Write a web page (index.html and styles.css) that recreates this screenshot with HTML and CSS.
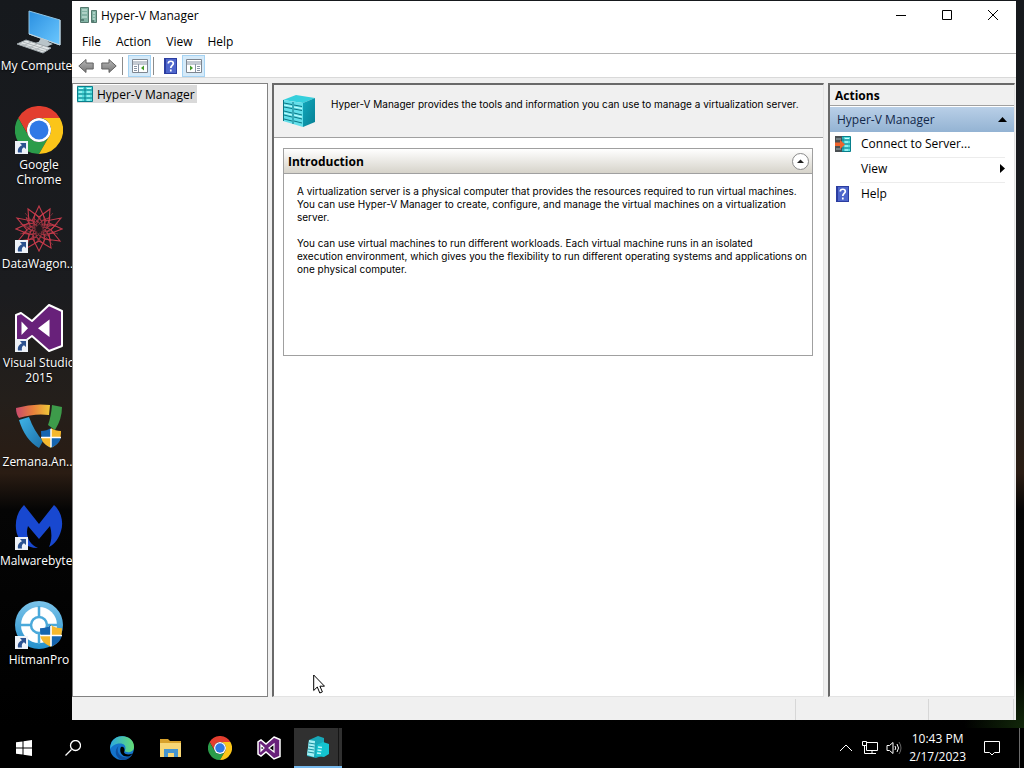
FILE: index.html
```html
<!DOCTYPE html>
<html lang="en">
<head>
    <meta charset="UTF-8">
    <meta name="viewport" content="width=device-width, initial-scale=1.0">
    <title>Hyper-V Manager</title>
    <link rel="stylesheet" href="styles.css">
</head>
<body>
    <!-- Shared icons -->
    <svg class="sprites" aria-hidden="true">
        <defs>
            <linearGradient id="screen" x1="0" y1="0" x2="1" y2="1"><stop offset="0" stop-color="#2a8fe0"/><stop offset="1" stop-color="#6cc8ff"/></linearGradient>
            <linearGradient id="zemana-top"><stop offset="0" stop-color="#c94a6c"/><stop offset=".5" stop-color="#e8803c"/><stop offset="1" stop-color="#f0c838"/></linearGradient>
            <linearGradient id="zemana-left" x1="0" y1="0" x2="1" y2="1"><stop offset="0" stop-color="#3fb4e8"/><stop offset="1" stop-color="#1c6fa8"/></linearGradient>
            <linearGradient id="ring" x1="0" y1="0" x2="0" y2="1"><stop offset="0" stop-color="#7cc4ea"/><stop offset="1" stop-color="#2490cc"/></linearGradient>
            <linearGradient id="arrow-fill" x1="0" y1="0" x2="0" y2="1"><stop offset="0" stop-color="#b8b8b8"/><stop offset="1" stop-color="#777"/></linearGradient>
            <linearGradient id="edge-top" x1="0" y1="0" x2="1" y2="0"><stop offset="0" stop-color="#2ca8e0"/><stop offset="1" stop-color="#64dc74"/></linearGradient>
            <linearGradient id="cube-side" x1="0" y1="0" x2="1" y2="1"><stop offset="0" stop-color="#12a8bc"/><stop offset="1" stop-color="#067f94"/></linearGradient>
        </defs>
        <symbol id="shortcut" viewBox="0 0 13 13">
            <path d="M0 0h13v13H0z" fill="#eef2f8"/>
            <path d="M5 2h6v6L9 6.200C7 7 6.500 9 7 11.500H3C2.300 8 4 5.500 7 4.200z" fill="#2c5290"/>
        </symbol>
        <symbol id="shield" viewBox="0 0 20 20">
            <path d="M10 0C7 2 4 3 0 3c0 8 2 13 10 17z" fill="#1565b0"/>
            <path d="M10 0c3 2 6 3 10 3 0 8-2 13-10 17z" fill="#f5b82e"/>
            <path d="M0 9h10v11C4 17 1 14 0 9z" fill="#f5b82e"/>
            <path d="M10 9h10c-1 5-4 8-10 11z" fill="#1565b0"/>
            <path d="M10 1v18M0 9.500h20" stroke="#fff" stroke-width="1.500"/>
        </symbol>
        <symbol id="chrome" viewBox="0 0 48 48">
            <path d="M3.200 12A24 24 0 0 1 44.800 12H24A12 12 0 0 0 13.600 30z" fill="#e33e2f"/>
            <path d="M3.200 12A24 24 0 0 0 24 48L34.400 30A12 12 0 0 1 13.600 30z" fill="#2b9c4a"/>
            <path d="M44.800 12A24 24 0 0 1 24 48L34.400 30A12 12 0 0 0 24 12z" fill="#fbc519"/>
            <circle cx="24" cy="24" r="12" fill="#fff"/>
            <circle cx="24" cy="24" r="9.500" fill="#2f79e6"/>
        </symbol>
        <symbol id="vs" viewBox="0 0 48 48">
            <path d="M34 1L47 7V42L34 47L17 32L6 40L1 37V11L6 9L17 17z" fill="#68217a" stroke="#fff" stroke-width="2" stroke-linejoin="round"/>
            <path d="M34.500 15.500V33L23 24.200zM6.500 17.500L13 24.200L6.500 31z" fill="#fff"/>
        </symbol>
        <symbol id="server" viewBox="0 0 16 16">
            <path d="M.5.500h15v15H.5z" fill="#56dede" stroke="#087f8c"/>
            <path d="M8 0v16M0 4h16M1 8h14M1 12h14" stroke="#087f8c"/>
            <path d="M2 2.500h4M10 2.500h4M2 6h3M10 6h3M2 10h3M10 10h3M2 14h3M10 14h3" stroke="#c9ffff"/>
        </symbol>
        <symbol id="help" viewBox="0 0 13 16">
            <path d="M0 0h13v16H0z" fill="#2b3da0"/>
            <path d="M2 1h10v14H2z" fill="#4e66cc"/>
            <path d="M4.300 5.500C4.300 2.500 9.300 2.500 9.300 5.500C9.300 7.500 6.800 7.500 6.800 10M6.800 11.500v2" fill="none" stroke="#fff" stroke-width="1.700"/>
        </symbol>
    </svg>

    <main class="desktop">
        <!-- Desktop shortcuts -->
        <nav class="shortcuts" aria-label="Desktop">
            <button class="shortcut">
                <svg viewBox="0 0 48 48">
                    <path d="M14 4L45 13V38L14 27z" fill="url(#screen)" stroke="#8fc4e4"/>
                    <path d="M14 27L45 38V13" fill="none" stroke="#c9d6dc"/>
                    <path d="M26 31l7 3-1 4-9-2zM20 36l9-3 9 4-7 3z" fill="#b9c4c9"/>
                    <path d="M11 33L36 41L28 46L2 37z" fill="#e2e6e7" stroke="#9aa3a8"/>
                    <path d="M8 35l25 8M5 36.500l25 8M16 35l-8 4M22 37l-8 4M28 39l-8 4" stroke="#a4acb0" stroke-width=".8"/>
                </svg>
                <span>My Computer</span>
            </button>
            <button class="shortcut">
                <svg viewBox="0 0 48 48"><use href="#chrome" width="48" height="48"/><use href="#shortcut" y="35" width="13" height="13"/></svg>
                <span>Google Chrome</span>
            </button>
            <button class="shortcut">
                <svg viewBox="0 0 48 48">
                    <g fill="none" stroke="#c23a4a" stroke-width="1.100">
                        <g id="petals">
                            <path d="M24 1L31 16L46 13L36 25L45 36L30 34L24 46L18 34L3 36L12 25L2 13L17 16z"/>
                            <path d="M35 4L34 18L47 24L34 29L36 43L24 36L12 43L14 29L1 24L14 18L13 4L24 12z"/>
                        </g>
                        <path d="M10 8L38 40M38 8L10 40M5 19L43 29M43 19L5 29" stroke-width=".5"/>
                        <use href="#petals" transform="translate(24 24) rotate(15) scale(.7) translate(-24 -24)"/>
                        <use href="#petals" transform="translate(24 24) rotate(5) scale(.5) translate(-24 -24)"/>
                        <use href="#petals" transform="translate(24 24) rotate(20) scale(.35) translate(-24 -24)"/>
                    </g>
                    <circle cx="24" cy="24" r="3" fill="#22191c"/>
                    <use href="#shortcut" y="35" width="13" height="13"/>
                </svg>
                <span>DataWagon...</span>
            </button>
            <button class="shortcut">
                <svg viewBox="0 0 48 48"><use href="#vs" width="48" height="48"/><use href="#shortcut" y="35" width="13" height="13"/></svg>
                <span>Visual Studio 2015</span>
            </button>
            <button class="shortcut">
                <svg viewBox="0 0 48 48">
                    <path d="M1 5Q18 0 35 2L34 12Q20 10 4 15Q1 11 1 5z" fill="url(#zemana-top)"/>
                    <path d="M37 2L47 4Q47 16 40 27L33 22Q36 14 37 2z" fill="#3d9b4a"/>
                    <path d="M4 17L14 14Q19 28 28 38L24 45Q10 37 4 17z" fill="url(#zemana-left)"/>
                    <use href="#shield" x="26" y="25" width="20" height="20"/>
                </svg>
                <span>Zemana.An...</span>
            </button>
            <button class="shortcut">
                <svg viewBox="0 0 48 48">
                    <path d="M9 3L24 22L39 3C46 9 49 20 46 29C44 36 40 42 34 45C37 38 37 31 35 24L24 37L13 24C10 33 14 42 23 46C10 46 2 38 1 27C0 17 3 9 9 3z" fill="#1848d0"/>
                    <use href="#shortcut" y="35" width="13" height="13"/>
                </svg>
                <span>Malwarebytes</span>
            </button>
            <button class="shortcut">
                <svg viewBox="0 0 48 48">
                    <circle cx="24" cy="24" r="24" fill="url(#ring)"/>
                    <circle cx="24" cy="24" r="18" fill="#fff"/>
                    <path d="M24 5v38M5 24h38" stroke="#4aa9da" stroke-width="2.500"/>
                    <circle cx="24" cy="24" r="8" fill="#fff" stroke="#4aa9da" stroke-width="2.500"/>
                    <use href="#shield" x="25" y="24" width="22" height="22"/>
                    <use href="#shortcut" y="35" width="13" height="13"/>
                </svg>
                <span>HitmanPro</span>
            </button>
        </nav>

        <!-- Application window -->
        <section class="window">
            <header class="titlebar">
                <svg class="title-icon" viewBox="0 0 17 16">
                    <path d="M.5.500h8v15h-8zM11.500 3.500h5v12h-5z" fill="#83b3a5" stroke="#54796e"/>
                    <path d="M2 3h5M2 6h5M2 10h5M13 6h2M13 9h2M13 12h2" stroke="#d7eee6"/>
                    <path d="M1 13h3M12 14h2" stroke="#2c5048"/>
                </svg>
                <h1>Hyper-V Manager</h1>
                <button class="caption" aria-label="Minimize"><svg viewBox="0 0 12 12"><path d="M1 6.500h10"/></svg></button>
                <button class="caption" aria-label="Maximize"><svg viewBox="0 0 12 12"><path d="M1.500 1.500h9v9h-9z"/></svg></button>
                <button class="caption" aria-label="Close"><svg viewBox="0 0 12 12"><path d="M1 1l10 10M11 1L1 11"/></svg></button>
            </header>
            <nav class="menubar">
                <button>File</button>
                <button>Action</button>
                <button>View</button>
                <button>Help</button>
            </nav>
            <div class="toolbar">
                <button aria-label="Back"><svg viewBox="0 0 16 16"><path d="M.8 8L8 1.500V5h7.200v6H8v3.500z" fill="url(#arrow-fill)" stroke="#606060"/></svg></button>
                <button aria-label="Forward"><svg viewBox="0 0 16 16"><path d="M15.200 8L8 1.500V5H.8v6H8v3.500z" fill="url(#arrow-fill)" stroke="#606060"/></svg></button>
                <span class="separator"></span>
                <button class="pressed" aria-label="Show console tree">
                    <svg viewBox="0 0 16 16"><path d="M.5 1.500h15v13H.5z" fill="#fff" stroke="#7e8690"/><path d="M1 4h14M1 6h14M6.500 6v8M2 8.500h3M2 10.500h3M2 12.500h3" stroke="#8894a4"/><path d="M12 7.500v5L9 10z" fill="#429b28"/></svg>
                </button>
                <span class="separator"></span>
                <button aria-label="Help"><svg viewBox="0 0 16 16"><use href="#help" x="1" width="13" height="16"/></svg></button>
                <button class="pressed" aria-label="Show action pane">
                    <svg viewBox="0 0 16 16"><path d="M.5 1.500h15v13H.5z" fill="#fff" stroke="#7e8690"/><path d="M1 4h14M1 6h14M9.500 6v8M11 8.500h3M11 10.500h3M11 12.500h3" stroke="#8894a4"/><path d="M4 7.500v5L7 10z" fill="#429b28"/></svg>
                </button>
            </div>

            <div class="panes">
                <aside class="tree">
                    <button class="tree-item"><svg viewBox="0 0 16 16"><use href="#server" width="16" height="16"/></svg>Hyper-V Manager</button>
                </aside>

                <article class="content">
                    <div class="banner">
                        <svg viewBox="0 0 34 34">
                            <path d="M1 6L14 1L33 4L21 9z" fill="#35cfdc"/>
                            <path d="M21 9L33 4V28L21 33z" fill="url(#cube-side)"/>
                            <path d="M1 6L21 9V33L1 27z" fill="#62dfea"/>
                            <path d="M1.500 6v21M11 8v22M2 9l8 1.500M2 13l8 1.500M2 17l8 2M2 21l8 2M2 25l8 2M12 11l8 1.500M12 15l8 1.500M12 19l8 2M12 23l8 2M12 27l8 2" stroke="#0a7584"/>
                            <path d="M2 11l8 1.500M2 19l8 2M12 13l8 1.500M12 21l8 2" stroke="#c8ffff"/>
                        </svg>
                        <p>Hyper-V Manager provides the tools and information you can use to manage a virtualization server.</p>
                    </div>
                    <section class="intro">
                        <header>
                            <h2>Introduction</h2>
                            <button aria-label="Collapse"><svg viewBox="0 0 17 17"><circle cx="8.500" cy="8.500" r="8" fill="#fff" stroke="#8a8a8a"/><path d="M5 10h7L8.500 6.500z" fill="#222"/></svg></button>
                        </header>
                        <p>A virtualization server is a physical computer that provides the resources required to run virtual machines.<br>You can use Hyper-V Manager to create, configure, and manage the virtual machines on a virtualization<br>server.</p>
                        <p>You can use virtual machines to run different workloads. Each virtual machine runs in an isolated<br>execution environment, which gives you the flexibility to run different operating systems and applications on<br>one physical computer.</p>
                    </section>
                </article>

                <aside class="actions">
                    <h2>Actions</h2>
                    <button class="group">Hyper-V Manager<svg viewBox="0 0 9 9"><path d="M0 7h9L4.500 2z"/></svg></button>
                    <button class="action">
                        <svg class="action-icon" viewBox="0 0 16 16"><use href="#server" width="16" height="16"/><path d="M0 0h7v16H0z" fill="#4a4f52"/><path d="M1 3h5M1 13h5" stroke="#9fb3b8"/><path d="M0 6.500h5V4l5 4.500L5 13v-3H0z" fill="#f0642c"/></svg>
                        <span>Connect to Server...</span>
                    </button>
                    <button class="action">
                        <i class="action-icon"></i>
                        <span>View</span>
                        <svg class="more" viewBox="0 0 9 9"><path d="M2 0v9l5-4.500z"/></svg>
                    </button>
                    <button class="action">
                        <svg class="action-icon" viewBox="0 0 16 16"><use href="#help" x="1" width="13" height="16"/></svg>
                        <span>Help</span>
                    </button>
                </aside>
            </div>
            <footer class="statusbar"><span></span><span></span><span></span></footer>
        </section>

        <svg class="cursor" viewBox="0 0 12 20"><path d="M.7 1v15.500l3.600-3.500 2.500 6 2.600-1.100-2.500-5.700h4.600z" fill="#fff" stroke="#000"/></svg>
    </main>

    <!-- Taskbar -->
    <footer class="taskbar">
        <button class="task" aria-label="Start"><svg viewBox="0 0 16 16"><path d="M0 2.300L6.500 1.400V7.500H0zM7.500 1.200L16 0V7.500H7.500zM0 8.500h6.500v6.100L0 13.700zM7.500 8.500H16V16l-8.500-1.200z" fill="#fff"/></svg></button>
        <button class="task" aria-label="Search"><svg viewBox="0 0 16 16"><path d="M.5 15.500L6.500 9.500" stroke="#fff" stroke-width="1.300"/><circle cx="10.500" cy="5.500" r="5" fill="none" stroke="#fff" stroke-width="1.300"/></svg></button>
        <button class="task large" aria-label="Microsoft Edge">
            <svg viewBox="0 0 24 24">
                <circle cx="12" cy="12" r="12" fill="#1474cc"/>
                <path d="M.5 10C2-3 24-3 24 11C24 17 16 17 14.500 15C16 13 16.500 7.500 10 7.500C5 7.500 2 10 0 13z" fill="url(#edge-top)"/>
                <path d="M8.500 10C6 15 9 21 16 21.500Q19 21.500 22.500 18C20 23 16 24 12 24C5 22 4 14 8.500 10z" fill="#0d4f9e"/>
                <path d="M14.500 15C13 17 16 20 22.800 17.500L20 20C14 22 9 18 10.500 12C11 10 15 10 14.500 15z" fill="#000"/>
            </svg>
        </button>
        <button class="task large" aria-label="File Explorer"><svg viewBox="0 0 24 24"><path d="M1 3h8l2 2h11v4H1z" fill="#d8a22c"/><path d="M1 7h21v14H1z" fill="#f8d775"/><path d="M5 13h14v8h-4v-4H9v4H5z" fill="#4595d0"/></svg></button>
        <button class="task large" aria-label="Google Chrome"><svg viewBox="0 0 24 24"><use href="#chrome" width="24" height="24"/></svg></button>
        <button class="task large" aria-label="Visual Studio">
            <svg viewBox="0 0 24 24"><path d="M17 1L23 3.500V20.500L17 23L9 16L4 20L1 18V6L4 4L9 8z" fill="#68217a" stroke="#fff" stroke-width="1.500"/><path d="M17 8v8l-5-4zM4 9l3 3-3 3z" fill="#000" stroke="#fff" stroke-width="1.200"/></svg>
        </button>
        <button class="task large active" aria-label="Hyper-V Manager">
            <svg viewBox="0 0 24 24">
                <path d="M3 5L12 1L18 3V20L10 23L1 21z" fill="#18a8b8"/>
                <path d="M3 5L9 6L8 22L1 20z" fill="#a5f0f4"/>
                <path d="M3 8l6 1M2.500 11l6 1M2 14l6 1M2 17l6 1" stroke="#16909e"/>
                <path d="M11 10L17 7L23 9V19L18 22L10 21z" fill="#14c4d0"/>
                <path d="M12 12l4 .5M11.500 15l4 .5M11 18l4 .5" stroke="#b8f8fa" stroke-width="1.500"/>
            </svg>
        </button>

        <div class="tray">
            <svg viewBox="0 0 16 16"><path d="M2 11l6-6 6 6"/></svg>
            <svg viewBox="0 0 16 16"><path d="M4.500 2.500h11v8h-11zM10 10.500v3M6 13.500h8M.5 1.500h4v4h-4zM2.500 5.500v8H6"/></svg>
            <svg viewBox="0 0 16 16"><path d="M1 5.500h2.500L7 2.500v11l-3.500-3H1zM9 6q1.500 2 0 4M11 4q3 4 0 8"/><path d="M13 2q4 6 0 12" opacity=".4"/></svg>
        </div>
        <time class="clock" datetime="2023-02-17T22:43">10:43 PM<br>2/17/2023</time>
        <button class="notifications" aria-label="Notifications"><svg viewBox="0 0 16 16"><path d="M.5 1.500h15v11h-5L8 15l-2.500-2.500h-5z"/></svg></button>
    </footer>
</body>
</html>
```
FILE: styles.css
```css
* {
    box-sizing: border-box;
}

body {
    margin: 0;
    height: 100vh;
    display: flex;
    flex-direction: column;
    overflow: hidden;
    background: #000;
    color: #000;
    font-family: "Open Sans", "Noto Sans", sans-serif;
    font-size: 12px;
    line-height: 15px;
}

button {
    padding: 0;
    border: none;
    background: none;
    color: inherit;
    font: inherit;
    text-align: left;
}

h1, h2, p {
    margin: 0;
    font-size: 12px;
}

svg {
    display: block;
    flex: none;
}

.sprites {
    position: absolute;
    width: 0;
    height: 0;
}

/* Desktop */
.desktop {
    position: relative;
    flex: 1;
    min-height: 0;
    display: flex;
    padding: 1px 8px 8px 0;
    background:
        radial-gradient(circle at 100% 100%, #12280a, transparent 60px),
        linear-gradient(#16191d 0, #1b1c1f 40%, #241f1b 55%, #2a1c13 65%, #050505 70%, #000 100%);
}

.shortcuts {
    width: 72px;
    flex: none;
    padding-top: 6px;
}

.shortcut {
    width: 78px;
    height: 99px;
    display: flex;
    flex-direction: column;
    align-items: center;
    gap: 3px;
    color: #fff;
    text-align: center;
    text-shadow: 0 1px 2px #000;
}

.shortcut svg {
    width: 48px;
    height: 48px;
}

/* Window, lies over the ends of the shortcut labels */
.window {
    position: relative;
    flex: 1;
    min-width: 0;
    display: flex;
    flex-direction: column;
    background: #f0f0f0;
}

.titlebar {
    height: 30px;
    display: flex;
    align-items: center;
    padding: 0 0 2px 8px;
    background: #fff;
}

.title-icon {
    width: 17px;
    height: 16px;
}

.titlebar h1 {
    flex: 1;
    padding-left: 4px;
    font-weight: 400;
}

.caption {
    width: 46px;
    height: 28px;
    display: flex;
    align-items: center;
    justify-content: center;
}

.caption svg {
    width: 12px;
    height: 12px;
    fill: none;
    stroke: #000;
}

.menubar {
    height: 22px;
    display: flex;
    align-items: center;
    gap: 15px;
    padding: 0 0 2px 10px;
    background: #fff;
}

.toolbar {
    height: 25px;
    display: flex;
    align-items: center;
    padding: 1px 0 0 2px;
    background: #fff;
    border-top: 1px solid #b4b4b4;
    border-bottom: 1px solid #d9d9d9;
}

.toolbar button {
    width: 23px;
    height: 22px;
    display: flex;
    align-items: center;
    justify-content: center;
}

.toolbar svg {
    width: 16px;
    height: 16px;
}

.toolbar .pressed {
    background: #d5eaf9;
    border: 1px solid #a5d3f3;
}

.separator {
    width: 1px;
    height: 18px;
    margin: 0 5px 0 2px;
    background: #8c8c8c;
}

.panes {
    flex: 1;
    min-height: 0;
    display: grid;
    grid-template-columns: 196px minmax(0, 1fr) 187px;
    gap: 4px;
    padding: 5px 1px 0 0;
}

.tree {
    padding: 1px 4px;
    background: #fff;
    border: 1px solid #828282;
}

.tree-item {
    height: 18px;
    display: flex;
    align-items: center;
    gap: 4px;
    padding-right: 2px;
    background: #d9d9d9;
}

.tree-item svg {
    width: 16px;
    height: 16px;
}

.content,
.actions {
    background: #fff;
    border: 1px solid #a0a0a0;
    border-top: 2px solid #696969;
    border-left: 2px solid #696969;
    border-right-color: #e3e3e3;
    border-bottom-color: #e3e3e3;
}

.content {
    font-family: Inter, "Liberation Sans", sans-serif;
    font-size: 10px;
    line-height: 13px;
}

.content p {
    font-size: 10px;
}

/* Introduction */
.banner {
    height: 53px;
    display: flex;
    gap: 15px;
    padding: 9px 8px;
    background: #f0f0f0;
    border-bottom: 1px solid #a0a0a0;
}

.banner svg {
    width: 34px;
    height: 34px;
}

.banner p {
    padding-top: 4px;
}

.intro {
    min-height: 208px;
    margin: 10px 10px 0 9px;
    border: 1px solid #a0a0a0;
}

.intro header {
    height: 25px;
    display: flex;
    align-items: center;
    justify-content: space-between;
    padding: 0 3px 0 4px;
    background: linear-gradient(#fff, #d6d3ca);
    border-bottom: 1px solid #a0a0a0;
}

.intro h2 {
    font-family: "Open Sans", "Noto Sans", sans-serif;
}

.intro header svg {
    width: 17px;
    height: 17px;
}

.intro p {
    padding: 0 13px;
    margin: 11px 0 13px;
    white-space: nowrap;
}

.intro p + p {
    margin: 0;
}

/* Actions */
.actions h2 {
    height: 21px;
    padding: 3px 5px;
    background: #f0f0f0;
    border-bottom: 1px solid #a0a0a0;
}

.group {
    width: 100%;
    height: 25px;
    margin-top: 1px;
    display: flex;
    align-items: center;
    justify-content: space-between;
    padding: 0 7px;
    background: linear-gradient(#b9cfe7, #93b3d3);
    color: #12284a;
}

.group svg,
.more {
    width: 9px;
    height: 9px;
    fill: #000;
}

.action {
    width: 100%;
    height: 25px;
    display: flex;
    align-items: center;
    gap: 10px;
    padding: 0 7px 2px 5px;
}

.action-icon {
    width: 16px;
    height: 16px;
}

.action span {
    flex: 1;
}

.action + .action {
    background: linear-gradient(#ececec, #ececec) 30px 0 / 145px 1px no-repeat;
}

.statusbar {
    height: 23px;
    display: grid;
    grid-template-columns: 1fr 133px 85px;
    padding: 2px 2px 0 0;
}

.statusbar span {
    border-right: 1px solid #d7d7d7;
}

.cursor {
    position: absolute;
    left: 313px;
    top: 674px;
    width: 12px;
    height: 20px;
}

/* Taskbar */
.taskbar {
    height: 40px;
    display: flex;
    align-items: center;
    gap: 1px;
    padding-right: 4px;
    background: #000;
    color: #fff;
}

.task {
    width: 48px;
    height: 40px;
    display: flex;
    align-items: center;
    justify-content: center;
}

.task svg {
    width: 16px;
    height: 16px;
}

.large svg {
    width: 24px;
    height: 24px;
}

.active {
    background: linear-gradient(90deg, #303030 44px, #151515 44px, #151515 45px, #303030 45px);
    border-bottom: 2px solid #76b9ed;
}

.tray {
    display: flex;
    gap: 8px;
    margin-left: auto;
    padding-right: 6px;
}

.tray svg,
.notifications svg {
    width: 16px;
    height: 16px;
    fill: none;
    stroke: #fff;
}

.clock {
    line-height: 18px;
    text-align: center;
}

.notifications {
    width: 53px;
    height: 40px;
    display: flex;
    align-items: center;
    justify-content: center;
    padding-right: 3px;
    border-right: 1px solid #6b6b6b;
}
```
